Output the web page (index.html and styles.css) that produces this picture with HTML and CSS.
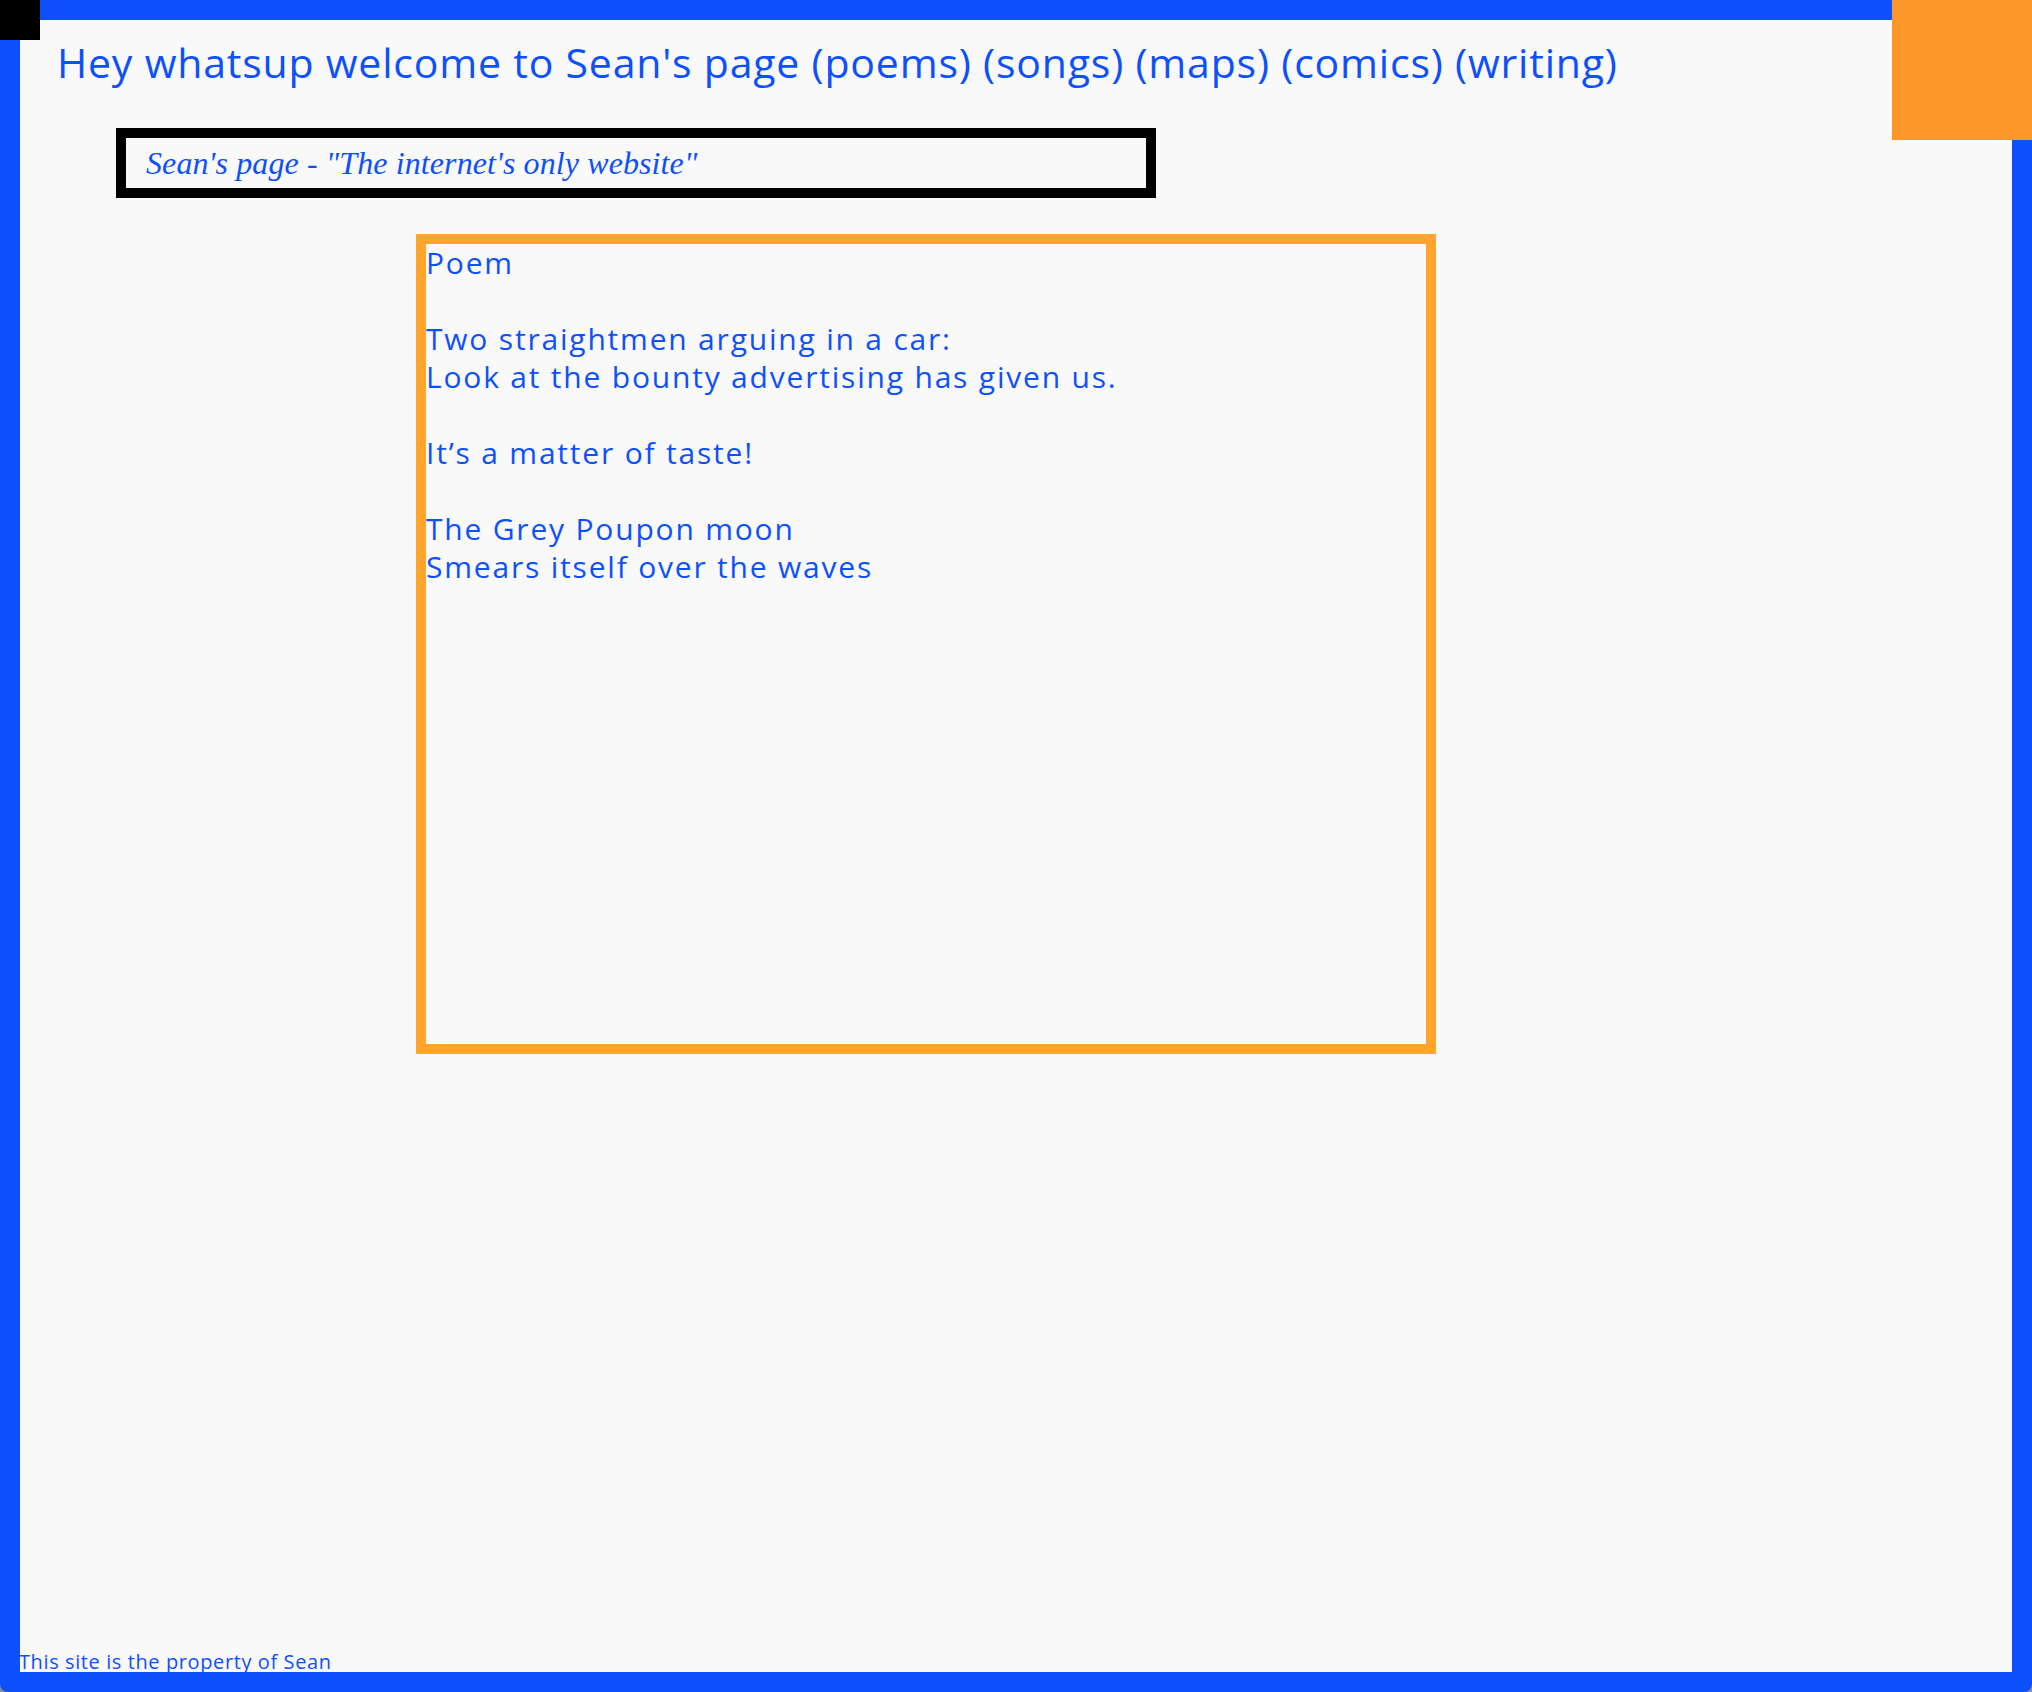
FILE: index.html
```html
<!DOCTYPE html>
<html lang="en">
<head>
<meta charset="utf-8">
<title>Sean's page</title>
<link rel="stylesheet" href="styles.css">
</head>
<body>
<div class="corner corner-black"></div>
<div class="corner corner-orange"></div>
<h1 class="title">Hey whatsup welcome to Sean's page (poems) (songs) (maps) (comics) (writing)</h1>
<div class="tagline">Sean's page - "The internet's only website"</div>
<div class="poem">
<p>Poem</p>
<p>Two straightmen arguing in a car:<br>Look at the bounty advertising has given us.</p>
<p>It’s a matter of taste!</p>
<p>The Grey Poupon moon<br>Smears itself over the waves</p>
</div>
<footer class="footer">This site is the property of Sean</footer>
</body>
</html>
```

FILE: styles.css
```css
html {
  height: 100%;
  background: #8a8a8a;
}
body {
  margin: 0;
  height: 100%;
  box-sizing: border-box;
  border: 20px solid #0e50fc;
  border-radius: 0 0 8px 8px;
  background: #f9f9f9;
  color: #0e50fc;
  font-family: "Open Sans", sans-serif;
  display: flex;
  flex-direction: column;
  align-items: flex-start;
  position: relative;
}
.corner {
  position: fixed;
  top: 0;
}
.corner-black {
  left: 0;
  width: 40px;
  height: 40px;
  background: #000;
}
.corner-orange {
  right: 0;
  width: 140px;
  height: 140px;
  background: #fc9628;
}
.title {
  margin: 0;
  padding: 18px 0 0 37px;
  font-size: 41px;
  font-weight: 400;
  line-height: 48px;
  letter-spacing: 0.8px;
}
.tagline {
  margin: 42px 0 0 96px;
  width: 1000px;
  height: 50px;
  border: 10px solid #000;
  padding-left: 20px;
  font-family: "Liberation Serif", serif;
  font-style: italic;
  font-size: 32px;
  line-height: 50px;
  letter-spacing: 0.1px;
}
.poem {
  margin: 36px 0 0 396px;
  width: 1000px;
  height: 800px;
  border: 10px solid #ffa52c;
  font-size: 30px;
  line-height: 38px;
  letter-spacing: 1.8px;
}
.poem p {
  margin: 0 0 38px;
}
.footer {
  margin-top: auto;
  margin-left: -1px;
  font-size: 20px;
  line-height: 20px;
  letter-spacing: 0.6px;
}
```
